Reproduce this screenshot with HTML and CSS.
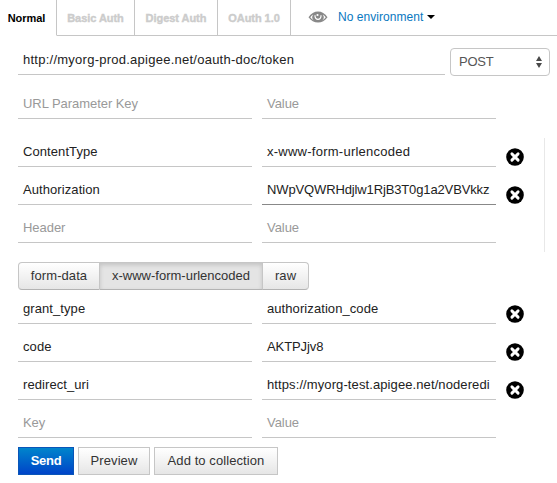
FILE: index.html
```html
<!DOCTYPE html>
<html lang="en">
<head>
<meta charset="utf-8">
<title>Request builder</title>
<link rel="stylesheet" href="styles.css">
</head>
<body>
<svg class="defs" width="0" height="0" aria-hidden="true">
  <symbol id="remove" viewBox="0 0 18 18">
    <circle cx="9" cy="9" r="8.8" fill="#000"/>
    <path d="M5.9 5.9L12.1 12.1M12.1 5.9L5.9 12.1" stroke="#fff" stroke-width="2.9" stroke-linecap="round"/>
  </symbol>
</svg>
<header class="topbar">
  <nav class="tabs">
    <span class="tab active"><span>Normal</span></span>
    <span class="tab basic"><span>Basic Auth</span></span>
    <span class="tab digest"><span>Digest Auth</span></span>
    <span class="tab oauth"><span>OAuth 1.0</span></span>
  </nav>
  <div class="environment">
    <svg class="eye" width="20" height="14" viewBox="0 0 20 14">
      <path d="M.5 7.2C5.2-.3 14.8-.3 19.5 7.2C14.8 14.3 5.2 14.3 .5 7.2Z" fill="#888"/>
      <path d="M5.2 4.4C3.6 6.7 3.9 8.9 5.9 10.4C4.4 9.8 3.2 8.7 2.3 7.3C3.1 6.1 4 5.1 5.2 4.4ZM14.8 4.4C16.4 6.7 16.1 8.9 14.1 10.4C15.6 9.8 16.8 8.7 17.7 7.3C16.9 6.1 16 5.1 14.8 4.4Z" fill="#fff"/>
      <path d="M7 5.2C6.5 10.8 13.5 10.8 13 5.2" fill="none" stroke="#fff" stroke-width="1.2"/>
      <circle cx="9.5" cy="5" r="1.1" fill="#fff"/>
    </svg>
    <span class="env-name">No environment</span>
    <span class="caret"></span>
  </div>
</header>
<main>
  <div class="url-row">
    <div class="field url wide"><span>http://myorg-prod.apigee.net/oauth-doc/token</span></div>
    <div class="select"><span>POST</span>
      <svg width="6" height="12" viewBox="0 0 6 12"><path d="M0 5L3 0L6 5ZM0 7L3 12L6 7Z" fill="#4a4a4a"/></svg>
    </div>
  </div>
  <div class="row params">
    <div class="field hint"><span>URL Parameter Key</span></div>
    <div class="field hint"><span>Value</span></div>
  </div>
  <section class="headers">
    <div class="row">
      <div class="field"><span>ContentType</span></div>
      <div class="field wide"><span>x-www-form-urlencoded</span></div>
      <svg class="remove"><use href="#remove"/></svg>
    </div>
    <div class="row">
      <div class="field"><span>Authorization</span></div>
      <div class="field focused"><span>NWpVQWRHdjlw1RjB3T0g1a2VBVkkz</span></div>
      <svg class="remove"><use href="#remove"/></svg>
    </div>
    <div class="row">
      <div class="field hint"><span>Header</span></div>
      <div class="field hint"><span>Value</span></div>
    </div>
  </section>
  <div class="mode">
    <span class="option form"><span>form-data</span></span>
    <span class="option encoded selected"><span>x-www-form-urlencoded</span></span>
    <span class="option raw"><span>raw</span></span>
  </div>
  <section class="body-fields">
    <div class="row">
      <div class="field"><span>grant_type</span></div>
      <div class="field"><span>authorization_code</span></div>
      <svg class="remove"><use href="#remove"/></svg>
    </div>
    <div class="row">
      <div class="field"><span>code</span></div>
      <div class="field caps"><span>AKTPJjv8</span></div>
      <svg class="remove"><use href="#remove"/></svg>
    </div>
    <div class="row">
      <div class="field"><span>redirect_uri</span></div>
      <div class="field link"><span>https://myorg-test.apigee.net/noderedi</span></div>
      <svg class="remove"><use href="#remove"/></svg>
    </div>
    <div class="row">
      <div class="field hint"><span>Key</span></div>
      <div class="field hint"><span>Value</span></div>
    </div>
  </section>
  <div class="actions">
    <span class="button send">Send</span>
    <span class="button preview">Preview</span>
    <span class="button add">Add to collection</span>
  </div>
</main>
</body>
</html>
```
FILE: styles.css
```css
* { box-sizing: border-box; }
body {
  margin: 0;
  width: 557px;
  height: 483px;
  overflow: hidden;
  background: #fff;
  color: #222;
  font: 13px/20px "Liberation Sans", Arial, sans-serif;
  letter-spacing: 0.08px;
  white-space: nowrap;
}
.defs { display: block; height: 0; }
.topbar { display: flex; height: 36px; }
.tabs { display: flex; }
.tab {
  display: flex;
  justify-content: center;
  padding-top: 8px;
  border-right: 1px solid #c6c6c6;
  border-bottom: 1px solid #c6c6c6;
  color: #ccc;
  font-size: 11px;
  font-weight: bold;
  letter-spacing: -0.05px;
  -webkit-text-stroke: 0.4px #ccc;
}
.tab.active { width: 57px; padding-right: 3px; border-bottom-color: #fff; color: #000; -webkit-text-stroke: 0; }
.basic { width: 78px; }
.digest { width: 83px; }
.oauth { width: 73px; }
.environment {
  display: flex;
  flex: 1;
  padding: 7px 0 0 17px;
  border-bottom: 1px solid #c6c6c6;
}
.eye { margin: 3px 10px 0 0; }
.env-name { width: 85px; color: #0878bf; font-size: 12px; letter-spacing: 0.05px; }
.caret {
  margin: 8px 0 0 4px;
  width: 8px;
  height: 4px;
  background: #000;
  clip-path: polygon(0 0, 100% 0, 50% 100%);
}
.url-row { display: flex; gap: 5px; height: 40px; padding-left: 18px; align-items: flex-end; }
.field {
  width: 234px;
  height: 28px;
  padding: 3px 5px 0;
  border-bottom: 1px solid #c6c6c6;
  color: #222;
}
.field > span { display: block; }
.field.url { width: 427px; margin-bottom: 1px; }
.field.hint { color: #999; letter-spacing: -0.05px; }
.field.wide { letter-spacing: 0.25px; }
.field.caps { letter-spacing: -0.1px; }
.field.link { letter-spacing: 0.1px; }
.field.focused { border-color: #888; letter-spacing: -0.13px; }
.select {
  display: flex;
  justify-content: space-between;
  align-items: center;
  width: 100px;
  height: 28px;
  padding: 0 7px 0 8px;
  border: 1px solid #c6c6c6;
  border-radius: 4px;
  color: #555;
  letter-spacing: -0.25px;
}
.row { display: flex; gap: 10px; height: 38px; padding-left: 18px; align-items: flex-end; }
.row.params { height: 43px; }
.remove { width: 18px; height: 18px; margin-bottom: 1px; }
.headers { width: 545px; height: 114px; margin-top: 19px; border-right: 1px solid #e8e8e8; }
.headers .row:first-child { height: 29px; }
.mode { display: flex; height: 28px; margin: 10px 0 0 18px; }
.option {
  display: flex;
  justify-content: center;
  padding-top: 3px;
  border: 1px solid #c6c6c6;
  border-bottom-color: #b3b3b3;
  border-left-width: 0;
  background: linear-gradient(#fff, #e6e6e6);
  color: #333;
}
.option.form { width: 82px; border-left-width: 1px; border-radius: 4px 0 0 4px; }
.option.encoded { width: 163px; background: #e4e4e4; box-shadow: inset 0 2px 4px rgba(0, 0, 0, 0.15); }
.option.encoded { letter-spacing: 0; }
.option.raw { width: 46px; border-radius: 0 4px 4px 0; }
.body-fields .row:first-child { height: 34px; }
.actions { display: flex; gap: 4px; margin: 9px 0 0 18px; }
.button {
  height: 28px;
  padding-top: 3px;
  border: 1px solid #c6c6c6;
  background: linear-gradient(#fff, #e6e6e6);
  color: #333;
  text-align: center;
}
.send { width: 56px; border-color: #0a55b8; background: linear-gradient(#0085cc, #0044c8); color: #fff; font-weight: bold; letter-spacing: -0.3px; }
.preview { width: 72px; }
.add { width: 124px; }
```
